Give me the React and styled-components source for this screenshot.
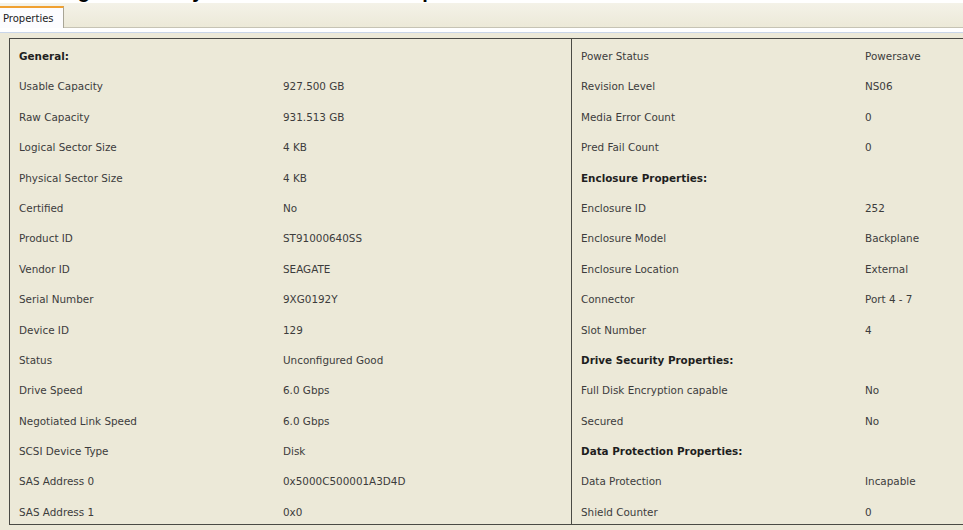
import React from "react";
import styled, { createGlobalStyle } from "styled-components";

const GlobalStyle = createGlobalStyle`
  html, body {
    margin: 0;
    padding: 0;
    background: #ffffff;
  }
  body {
    font-family: "DejaVu Sans", Tahoma, sans-serif;
  }
`;

const Page = styled.div`
  width: 963px;
  height: 530px;
  overflow: hidden;
  display: flex;
  flex-direction: column;
  background: #ece9d8;
`;

// cropped caption line at the very top of the screenshot
const Caption = styled.div`
  height: 3px;
  overflow: hidden;
  background: #ffffff;
`;

const CaptionText = styled.div`
  margin-top: -20px;
  margin-left: 60px;
  font-family: "Liberation Sans", Arial, sans-serif;
  font-weight: bold;
  font-size: 20px;
  line-height: 23px;
  color: #000;
  word-spacing: 40px;
`;

const TabStrip = styled.div`
  height: 24px;
  display: flex;
  align-items: flex-end;
  background: linear-gradient(#f4f2e8, #ece9d8);
  border-bottom: 1px solid #c6c3b4;
`;

const Tab = styled.div`
  height: 20px;
  width: 58px;
  padding: 0 2px 0 3px;
  display: flex;
  align-items: center;
  font-size: 10px;
  color: #222;
  background: #fcfcfe;
  border-top: 2px solid #f0a030;
  border-right: 1px solid #a8a596;
  margin-bottom: -1px;
`;

const TabRule = styled.div`
  height: 4px;
  background: #ffffff;
  border-bottom: 1px solid #c9d6ea;
`;

const Body = styled.div`
  flex: 1;
  padding: 5px 0 0 9px;
  display: flex;
  overflow: hidden;
`;

const Panel = styled.div`
  width: 980px;
  height: 485px;
  flex-shrink: 0;
  border-top: 1px solid #4a4a44;
  border-left: 1px solid #4a4a44;
  border-bottom: 1px solid #4a4a44;
  display: grid;
  grid-template-columns: 562px 1fr;
  overflow: hidden;
`;

const Column = styled.div`
  display: grid;
  grid-template-columns: ${(p) => p.$labelWidth}px 1fr;
  grid-auto-rows: 30.4px;
  align-content: start;
  padding: 11px 0 0 9px;
  border-right: ${(p) => (p.$divider ? "1px solid #4a4a44" : "none")};
`;

const Cell = styled.div`
  font-size: 10.4px;
  line-height: 12px;
  color: ${(p) => (p.$head ? "#1e1e1e" : "#3c3c3c")};
  font-weight: ${(p) => (p.$head ? "bold" : "normal")};
  white-space: nowrap;
`;

const left = [
  ["General:", "", true],
  ["Usable Capacity", "927.500 GB"],
  ["Raw Capacity", "931.513 GB"],
  ["Logical Sector Size", "4 KB"],
  ["Physical Sector Size", "4 KB"],
  ["Certified", "No"],
  ["Product ID", "ST91000640SS"],
  ["Vendor ID", "SEAGATE"],
  ["Serial Number", "9XG0192Y"],
  ["Device ID", "129"],
  ["Status", "Unconfigured Good"],
  ["Drive Speed", "6.0 Gbps"],
  ["Negotiated Link Speed", "6.0 Gbps"],
  ["SCSI Device Type", "Disk"],
  ["SAS Address 0", "0x5000C500001A3D4D"],
  ["SAS Address 1", "0x0"],
];

const right = [
  ["Power Status", "Powersave"],
  ["Revision Level", "NS06"],
  ["Media Error Count", "0"],
  ["Pred Fail Count", "0"],
  ["Enclosure Properties:", "", true],
  ["Enclosure ID", "252"],
  ["Enclosure Model", "Backplane"],
  ["Enclosure Location", "External"],
  ["Connector", "Port 4 - 7"],
  ["Slot Number", "4"],
  ["Drive Security Properties:", "", true],
  ["Full Disk Encryption capable", "No"],
  ["Secured", "No"],
  ["Data Protection Properties:", "", true],
  ["Data Protection", "Incapable"],
  ["Shield Counter", "0"],
];

const renderRows = (rows) =>
  rows.map(([label, value, head]) => (
    <React.Fragment key={label}>
      <Cell $head={head}>{label}</Cell>
      <Cell>{value}</Cell>
    </React.Fragment>
  ));

export default function App() {
  return (
    <>
      <GlobalStyle />
      <Page>
        <Caption>
          <CaptionText>Figure Physical Drive Properties</CaptionText>
        </Caption>
        <TabStrip>
          <Tab>Properties</Tab>
        </TabStrip>
        <TabRule />
        <Body>
          <Panel>
            <Column $labelWidth={264} $divider>
              {renderRows(left)}
            </Column>
            <Column $labelWidth={284}>{renderRows(right)}</Column>
          </Panel>
        </Body>
      </Page>
    </>
  );
}
